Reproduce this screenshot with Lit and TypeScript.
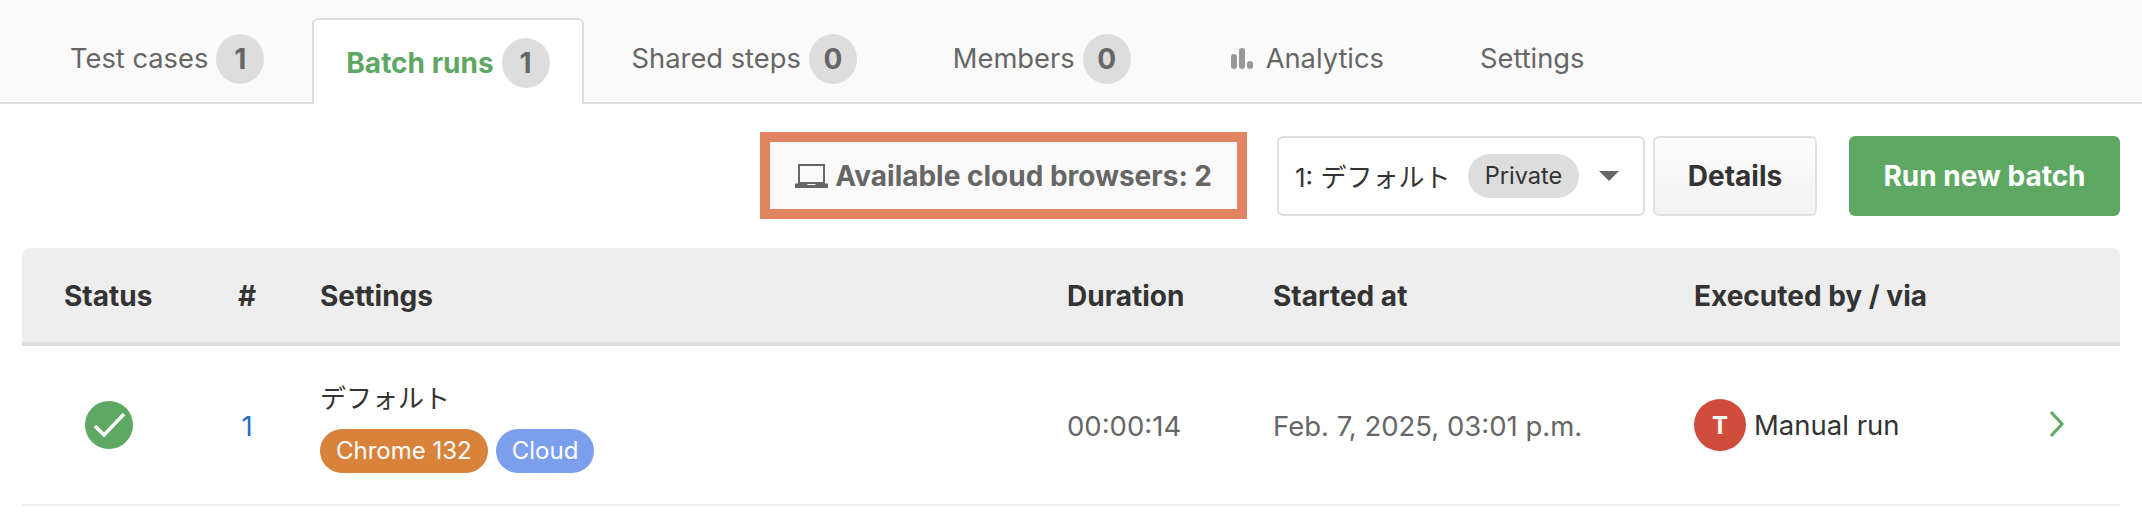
import { LitElement, html, css } from "lit";
import { customElement } from "lit/decorators.js";

@customElement("app-root")
export class AppRoot extends LitElement {
  static styles = css`
    :host {
      display: block;
      width: 2142px;
      min-height: 528px;
      background: #fff;
      font-family: Inter, "Noto Sans CJK JP", sans-serif;
      font-size: 27.5px;
      color: #333;
    }
    .tabs {
      display: flex;
      height: 102px;
      padding: 0 22px;
      background: #fafafa;
      border-bottom: 2px solid #ddd;
      box-sizing: content-box;
      font-size: 27.3px;
    }
    .tab {
      display: flex;
      align-items: center;
      gap: 8px;
      height: 84px;
      margin-top: 18px;
      padding: 0 48px 3px;
      box-sizing: border-box;
      color: #666;
      white-space: nowrap;
    }
    .tab.active {
      height: 86px;
      padding: 2px 32px 0;
      border: 2px solid #ddd;
      border-bottom: 0;
      border-radius: 6px 6px 0 0;
      background: #fff;
      color: #5ea864;
      font-weight: 700;
      font-size: 28px;
    }
    .count {
      display: flex;
      align-items: center;
      justify-content: center;
      width: 48px;
      height: 50px;
      border-radius: 50%;
      background: #ddd;
      color: #666;
      font-weight: 700;
      font-size: 28px;
    }
    .chart {
      width: 23px;
      height: 23px;
      margin: 0 4px 0 4px;
      fill: #999;
    }
    .toolbar {
      display: flex;
      justify-content: flex-end;
      align-items: center;
      padding: 28px 22px 29px;
    }
    .cloud {
      display: flex;
      align-items: center;
      gap: 7px;
      height: 87px;
      padding: 1px 25px 0;
      margin-right: 30px;
      box-sizing: border-box;
      border: 10px solid #e08462;
      background: #fafafa;
      color: #666;
      font-weight: 700;
      font-size: 28px;
      white-space: nowrap;
    }
    .laptop {
      width: 33px;
      height: 24px;
    }
    .select {
      display: flex;
      align-items: center;
      width: 368px;
      height: 80px;
      padding: 0 24px 0 16px;
      box-sizing: border-box;
      border: 2px solid #e0e0e0;
      border-radius: 6px;
      color: #333;
      font-size: 26px;
      white-space: nowrap;
    }
    .select-name {
      flex: 1;
    }
    .private {
      display: flex;
      align-items: center;
      justify-content: center;
      width: 111px;
      height: 44px;
      border-radius: 22px;
      background: #ddd;
      font-size: 23.6px;
    }
    .caret {
      width: 0;
      height: 0;
      margin-left: 20px;
      border-left: 10.5px solid transparent;
      border-right: 10.5px solid transparent;
      border-top: 10px solid #666;
    }
    .btn {
      display: flex;
      align-items: center;
      justify-content: center;
      height: 80px;
      box-sizing: border-box;
      border-radius: 6px;
      font-weight: 700;
      font-size: 28px;
    }
    .details {
      width: 164px;
      margin-left: 8px;
      border: 2px solid #e0e0e0;
      background: linear-gradient(#fdfdfd, #f2f2f2);
      color: #333;
    }
    .run {
      width: 271px;
      margin-left: 32px;
      background: #5ea864;
      color: #fff;
    }
    .table {
      margin: 0 22px;
    }
    .grid {
      display: grid;
      grid-template-columns: 216px 82px 747px 206px 421px 355px 71px;
      align-items: center;
    }
    .head {
      height: 98px;
      padding-top: 2px;
      box-sizing: border-box;
      background: #eee;
      border-bottom: 4px solid #ddd;
      border-radius: 8px 8px 0 0;
      font-weight: 700;
      font-size: 28px;
    }
    .row {
      height: 160px;
      box-sizing: border-box;
      border-bottom: 2px solid #eee;
    }
    .status-cell {
      padding-left: 42px;
    }
    .status-inner {
      display: flex;
      justify-content: center;
      width: 90px;
    }
    .check {
      width: 48px;
      height: 48px;
    }
    .num {
      width: 18px;
      padding-top: 2px;
      text-align: center;
      color: #2a6fc4;
    }
    .settings-cell {
      padding-top: 5px;
    }
    .name {
      font-size: 26px;
      line-height: 32px;
      margin-bottom: 14px;
    }
    .tags {
      display: flex;
      gap: 8px;
    }
    .tag {
      display: flex;
      align-items: center;
      height: 44px;
      padding: 0 16px;
      border-radius: 22px;
      color: #fff;
      font-size: 24px;
    }
    .chrome { background: #d8823c; }
    .cloud-tag { background: #7b9fec; }
    .muted {
      padding-top: 2px;
      color: #666;
    }
    .exec {
      display: flex;
      align-items: center;
      gap: 8px;
    }
    .avatar {
      display: flex;
      align-items: center;
      justify-content: center;
      width: 52px;
      height: 52px;
      border-radius: 50%;
      background: #d04d3e;
      color: #fff;
      font-weight: 700;
      font-size: 24px;
    }
    .chev {
      display: block;
      width: 16px;
      height: 26px;
      margin-bottom: 3px;
      fill: none;
      stroke: #5ea864;
      stroke-width: 3;
    }
  `;

  render() {
    return html`
      <nav class="tabs">
        <div class="tab">Test cases <span class="count">1</span></div>
        <div class="tab active">Batch runs <span class="count">1</span></div>
        <div class="tab">Shared steps <span class="count">0</span></div>
        <div class="tab">Members <span class="count">0</span></div>
        <div class="tab">
          <svg class="chart" viewBox="0 0 23 23">
            <rect x="0" y="7" width="6" height="15" rx="3"></rect>
            <rect x="8" y="1" width="6" height="21" rx="3"></rect>
            <rect x="16" y="14" width="6" height="8" rx="3"></rect>
          </svg>
          Analytics
        </div>
        <div class="tab">Settings</div>
      </nav>
      <div class="toolbar">
        <div class="cloud">
          <svg class="laptop" viewBox="0 0 33 24">
            <path d="M4 1h25v18H4z" fill="none" stroke="#666" stroke-width="2"></path>
            <path d="M0 19.5h12.5v1.5h8v-1.5H33V24H0z" fill="#666"></path>
          </svg>
          Available cloud browsers: 2
        </div>
        <div class="select">
          <span class="select-name">1: デフォルト</span>
          <span class="private">Private</span>
          <span class="caret"></span>
        </div>
        <div class="btn details">Details</div>
        <div class="btn run">Run new batch</div>
      </div>
      <div class="table">
        <div class="grid head">
          <div class="status-cell">Status</div>
          <div>#</div>
          <div>Settings</div>
          <div>Duration</div>
          <div>Started at</div>
          <div>Executed by / via</div>
          <div></div>
        </div>
        <div class="grid row">
          <div class="status-cell">
            <div class="status-inner">
              <svg class="check" viewBox="0 0 48 48">
                <circle cx="24" cy="24" r="24" fill="#5ea864"></circle>
                <path d="M10 25l9 9 20-21" fill="none" stroke="#fff" stroke-width="3.5"></path>
              </svg>
            </div>
          </div>
          <div class="num">1</div>
          <div class="settings-cell">
            <div class="name">デフォルト</div>
            <div class="tags">
              <span class="tag chrome">Chrome 132</span>
              <span class="tag cloud-tag">Cloud</span>
            </div>
          </div>
          <div class="muted">00:00:14</div>
          <div class="muted">Feb. 7, 2025, 03:01 p.m.</div>
          <div class="exec">
            <span class="avatar">T</span>
            <span>Manual run</span>
          </div>
          <div>
            <svg class="chev" viewBox="0 0 16 26"><path d="M2 1l11 12L2 25"></path></svg>
          </div>
        </div>
      </div>
    `;
  }
}
